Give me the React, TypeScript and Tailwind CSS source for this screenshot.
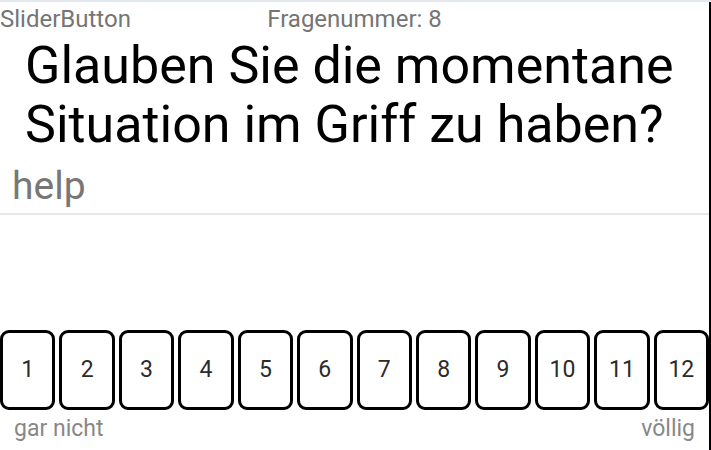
const values = [1, 2, 3, 4, 5, 6, 7, 8, 9, 10, 11, 12]

function ScaleButton({ value }: { value: number }) {
  return (
    <button className="flex h-[80px] flex-1 items-center justify-center rounded-[9px] border-[3px] border-black bg-white text-[23px] text-[#2b2b2b]">
      {value}
    </button>
  )
}

export default function App() {
  return (
    <div
      className="h-[450px] w-[711px] overflow-hidden bg-white"
      style={{ fontFamily: 'Roboto, "Noto Sans", sans-serif' }}
    >
      <div className="h-[2px] w-full bg-[#e3e8ee]" />
      <div className="flex h-[448px] border-r-2 border-black">
        <div className="w-[709px]">
          {/* header row */}
          <div className="relative mt-[3px] h-[28px] text-[24px] leading-[28px] text-[#757575]">
            <span className="absolute left-0 top-0">SliderButton</span>
            <div className="text-center">Fragenummer: 8</div>
          </div>

          <h1 className="mt-[3px] pl-[25px] text-[52px] leading-[59px] text-black">
            Glauben Sie die momentane
            <br />
            Situation im Griff zu haben?
          </h1>

          <div className="mt-[10px] pl-[12px] text-[39px] leading-[44px] text-[#777]">help</div>
          <div className="mt-[5px] h-[2px] bg-[#e6e6e6]" />

          <div className="mt-[115px] flex gap-1">
            {values.map((v) => (
              <ScaleButton key={v} value={v} />
            ))}
          </div>

          <div className="mt-[6px] flex justify-between px-[14px] text-[23px] leading-[26px] text-[#888]">
            <span>gar nicht</span>
            <span>völlig</span>
          </div>
        </div>
      </div>
    </div>
  )
}
